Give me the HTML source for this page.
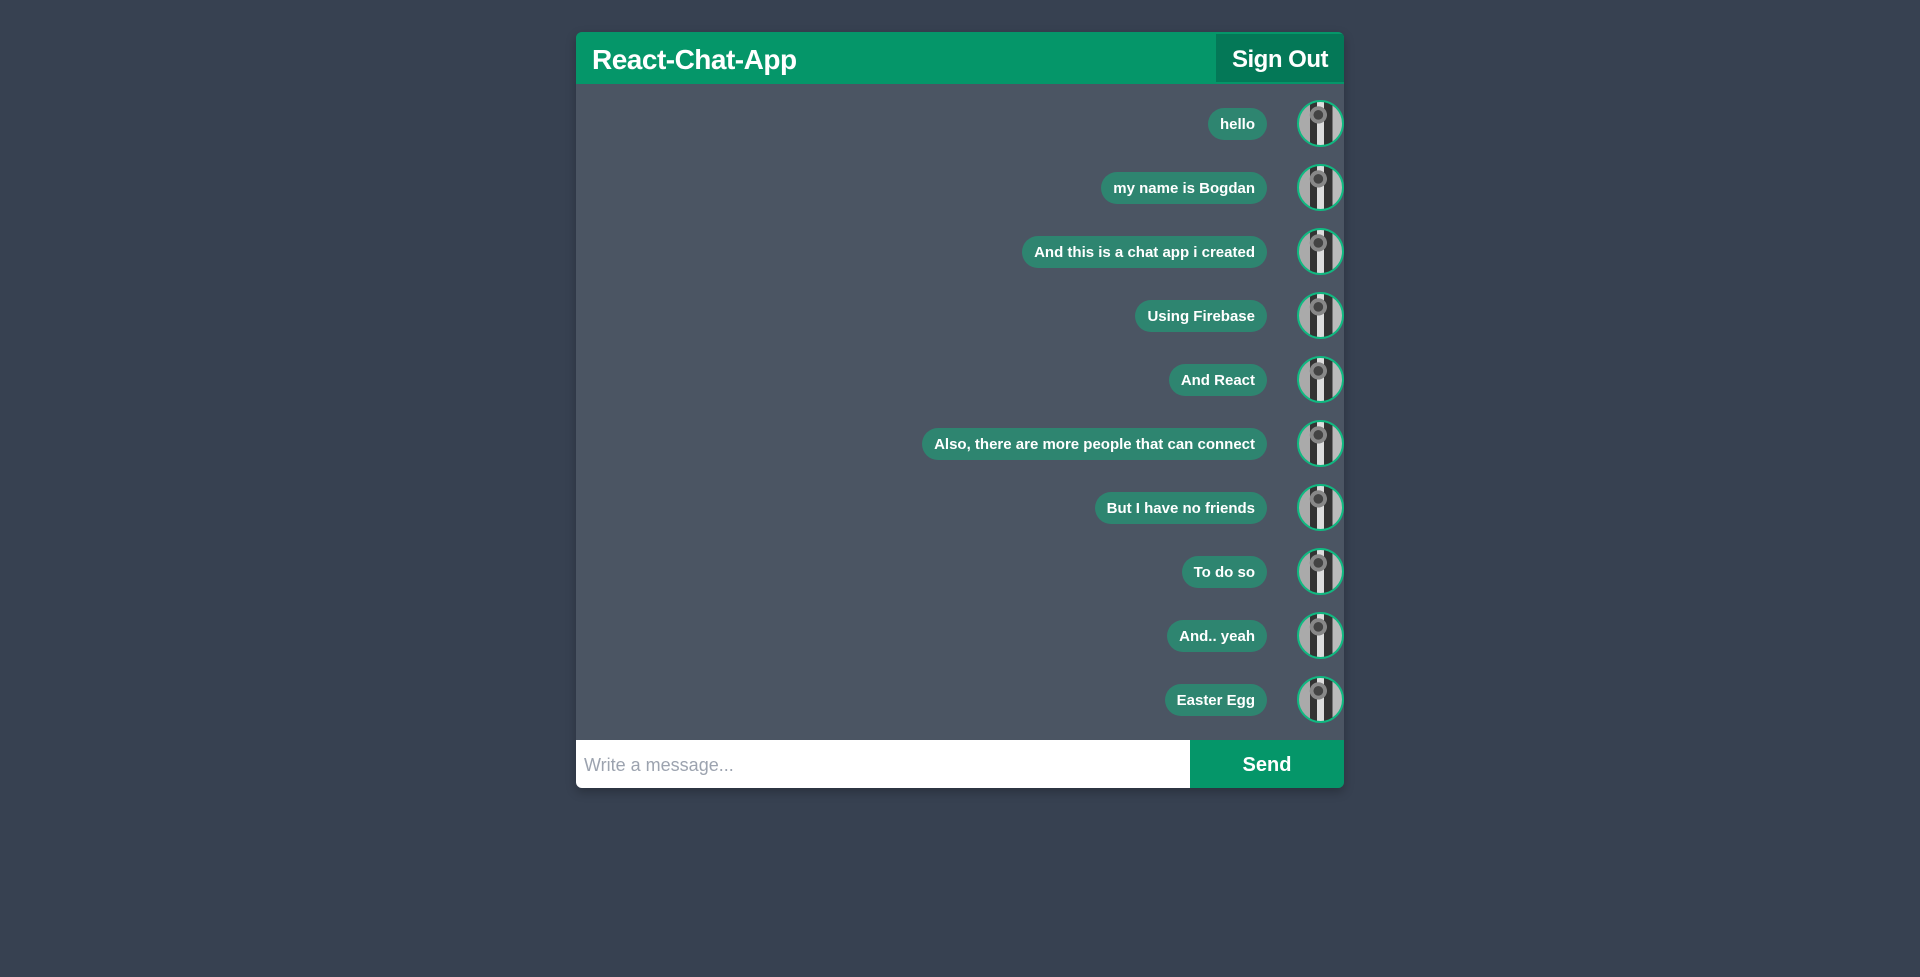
<!DOCTYPE html>
<html><head><style>
body{margin:0;width:1920px;height:977px;background:#374151;font-family:"Liberation Sans",sans-serif;overflow:hidden;position:relative}
.card{position:absolute;left:576px;top:32px;width:768px;height:756px;border-radius:6px;overflow:hidden;background:#4b5563;box-shadow:0 4px 10px rgba(0,0,0,.25)}
.hdr{position:absolute;left:0;top:0;width:768px;height:52px;background:#059669}
.title{position:absolute;left:16px;top:12px;font-size:28px;font-weight:bold;color:#fff;letter-spacing:-0.5px}
.so{position:absolute;left:640px;top:2px;width:128px;height:48px;background:#047857;color:#fff;font-size:24px;font-weight:bold;text-align:center;line-height:52px;letter-spacing:-0.5px}
.row{position:absolute;right:0;height:48px;width:768px}
.bub{position:absolute;right:77px;top:8px;height:32px;line-height:34px;padding:0 12px;border-radius:16px;background:#2e8570;color:#fff;font-size:15px;font-weight:bold;white-space:nowrap}
.av{position:absolute;right:0;top:0;width:43px;height:43px;border:2px solid #10b981;border-radius:50%;background:radial-gradient(circle at 45% 30%,#444 0 12%,#888 13% 22%,transparent 23%),linear-gradient(90deg,#aaa 0 25%,#333 25% 42%,#ddd 42% 58%,#333 58% 78%,#bbb 78%);}
.in{position:absolute;left:0;top:708px;width:614px;height:48px;background:#fff}
.in span{position:absolute;left:8px;top:15px;font-size:18px;color:#9ca3af}
.send{position:absolute;left:614px;top:708px;width:154px;height:48px;background:#059669;color:#fff;font-size:20px;font-weight:bold;text-align:center;line-height:50px}
</style></head><body>
<div class="card">
<div class="hdr"><div class="title">React-Chat-App</div><div class="so">Sign Out</div></div>
<div class="row" style="top:68px"><div class="bub">hello</div><div class="av"></div></div>
<div class="row" style="top:132px"><div class="bub">my name is Bogdan</div><div class="av"></div></div>
<div class="row" style="top:196px"><div class="bub">And this is a chat app i created</div><div class="av"></div></div>
<div class="row" style="top:260px"><div class="bub">Using Firebase</div><div class="av"></div></div>
<div class="row" style="top:324px"><div class="bub">And React</div><div class="av"></div></div>
<div class="row" style="top:388px"><div class="bub">Also, there are more people that can connect</div><div class="av"></div></div>
<div class="row" style="top:452px"><div class="bub">But I have no friends</div><div class="av"></div></div>
<div class="row" style="top:516px"><div class="bub">To do so</div><div class="av"></div></div>
<div class="row" style="top:580px"><div class="bub">And.. yeah</div><div class="av"></div></div>
<div class="row" style="top:644px"><div class="bub">Easter Egg</div><div class="av"></div></div>
<div class="in"><span>Write a message...</span></div>
<div class="send">Send</div>
</div>
</body></html>
